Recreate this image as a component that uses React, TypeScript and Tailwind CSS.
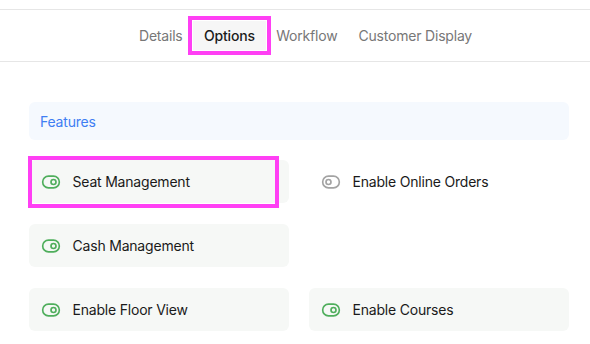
import { ToggleLeft, ToggleRight } from 'lucide-react';

const TABS = ['Details', 'Options', 'Workflow', 'Customer Display'] as const;

const FEATURES = [
  { label: 'Seat Management', on: true, marked: true },
  { label: 'Enable Online Orders', on: false, marked: false },
  { label: 'Cash Management', on: true, marked: false },
  { label: '', on: false, marked: false },
  { label: 'Enable Floor View', on: true, marked: false },
  { label: 'Enable Courses', on: true, marked: false },
];

export default function App() {
  return (
    <div className="h-[344px] w-[590px] overflow-hidden bg-white font-['Inter',_'Liberation_Sans',_sans-serif] text-[14px] tracking-[-0.2px]">
      <nav className="mt-[9px] flex h-[53px] items-center justify-center border-y border-[#e6e6e6] pl-[21px]">
        {TABS.map((tab) => {
          const active = tab === 'Options';
          return (
            <button
              key={tab}
              type="button"
              className={
                active
                  ? 'h-[29px] bg-[#f6f6f6] px-[11px] font-medium text-[#1c1c1c] outline-[4px] outline-offset-[1.5px] outline-[#ff3ff4] outline-solid'
                  : 'h-[29px] px-[10.5px] text-[#777777]'
              }
            >
              {tab}
            </button>
          );
        })}
      </nav>

      <div className="pt-[40px] pr-[21px] pl-[29px]">
        <div className="flex h-[38px] items-center rounded-md bg-[#f5f9fe] px-[11px] text-[#3f7ef3]">Features</div>

        <div className="mt-[20px] grid grid-cols-2 gap-x-5 gap-y-[21px]">
          {FEATURES.map((item, i) =>
            item.label ? (
              <div
                key={i}
                className={`relative flex h-[43px] items-center gap-3 rounded-md px-[11.5px] text-[#1a1a1a] ${item.on ? 'bg-[#f6f8f6]' : ''}`}
              >
                {item.on ? (
                  <ToggleRight size={20} strokeWidth={2} className="text-[#4fae5c]" />
                ) : (
                  <ToggleLeft size={20} strokeWidth={2} className="text-[#a3a3a3]" />
                )}
                <span>{item.label}</span>
                {item.marked ? (
                  <div className="pointer-events-none absolute -top-[4px] -left-[1px] h-[52px] w-[251px] border-4 border-[#ff3ff4]" />
                ) : null}
              </div>
            ) : (
              <div key={i} />
            ),
          )}
        </div>
      </div>
    </div>
  );
}
